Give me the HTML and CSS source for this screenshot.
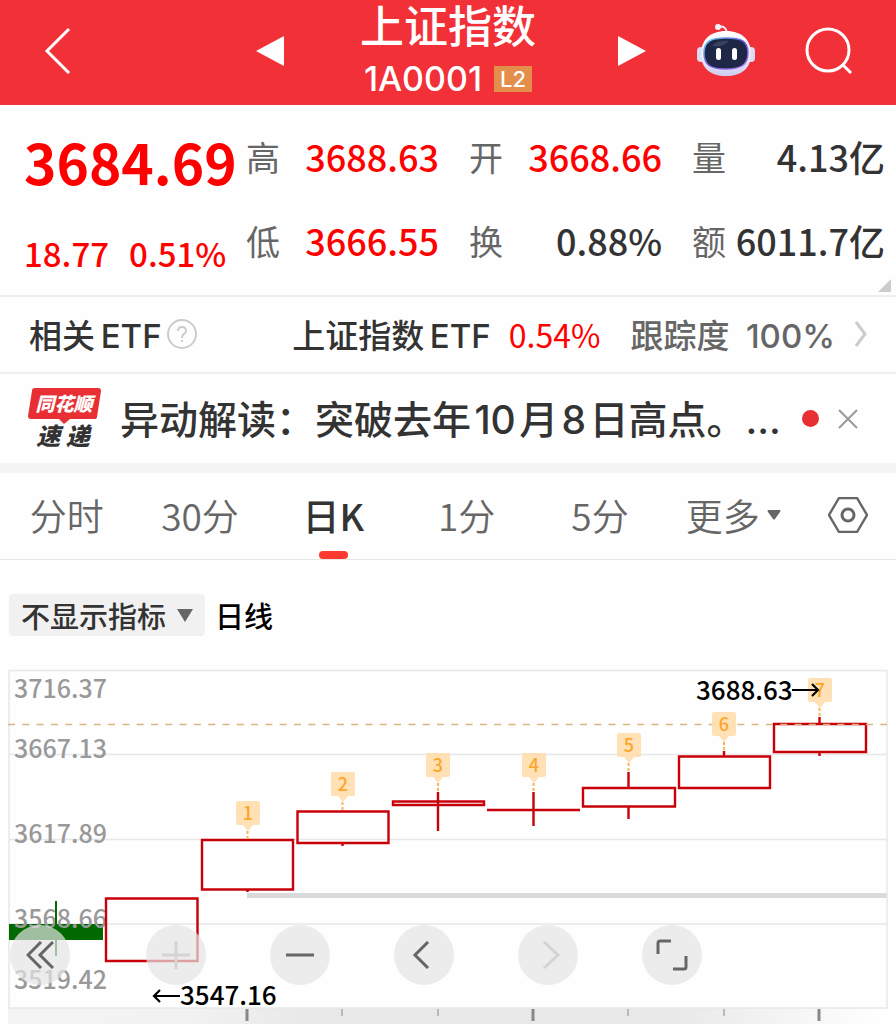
FILE: index.html
```html
<!DOCTYPE html>
<html lang="zh-CN">

<head>
    <meta charset="UTF-8" />
    <meta name="viewport" content="width=device-width, initial-scale=1.0" />
    <title>上证指数 1A0001</title>
    <link rel="stylesheet" href="styles.css">
</head>

<body>
    <header class="topbar">
        <div class="topbar-left">
            <button class="icon-btn" aria-label="返回">
                <svg width="28" height="48" viewBox="0 0 28 48"><path d="M26 2 L4 24 L26 46" fill="none" stroke="#fff" stroke-width="3" /></svg>
            </button>
            <button class="icon-btn" aria-label="上一个">
                <svg width="28" height="30" viewBox="0 0 28 30"><path d="M0 15 L28 0 V30 Z" fill="#fff" /></svg>
            </button>
        </div>
        <div class="topbar-title">
            <h1>上证指数</h1>
            <div class="code">1A0001 <span class="level">L2</span></div>
        </div>
        <div class="topbar-right">
            <button class="icon-btn" aria-label="下一个">
                <svg width="28" height="30" viewBox="0 0 28 30"><path d="M28 15 L0 0 V30 Z" fill="#fff" /></svg>
            </button>
            <button class="icon-btn" aria-label="智能助手">
                <svg width="58" height="54" viewBox="0 0 58 54">
                    <defs>
                        <linearGradient id="shell" x1="0" y1="0" x2="0" y2="1">
                            <stop offset="0" stop-color="#ffffff" />
                            <stop offset="0.6" stop-color="#ebeafa" />
                            <stop offset="1" stop-color="#cfcdf0" />
                        </linearGradient>
                        <linearGradient id="rim" x1="0" y1="0" x2="1" y2="1">
                            <stop offset="0" stop-color="#63d6ea" />
                            <stop offset="0.5" stop-color="#6a4fd8" />
                            <stop offset="1" stop-color="#b07cf5" />
                        </linearGradient>
                    </defs>
                    <path d="M21 3 Q29 1 30 9" fill="none" stroke="#eeeefa" stroke-width="2" />
                    <circle cx="21" cy="3" r="3" fill="#f4f3fd" />
                    <rect x="0" y="23" width="8" height="15" rx="4" fill="#dcdbf3" />
                    <rect x="50" y="23" width="8" height="15" rx="4" fill="#dcdbf3" />
                    <path d="M29 7 C45 7 54 16 54 30 C54 44 45 52 29 52 C13 52 4 44 4 30 C4 16 13 7 29 7 Z" fill="url(#shell)" />
                    <path d="M29 14 C44 14 51 17 51 29 C51 41 44 45 29 45 C14 45 7 41 7 29 C7 17 14 14 29 14 Z" fill="#1f2746" stroke="url(#rim)" stroke-width="1.5" />
                    <path d="M15 22 Q20 16 32 17 Q26 24 15 22" fill="#39415f" />
                    <rect x="19" y="24" width="5" height="12" rx="2.5" fill="#fff" />
                    <rect x="35" y="24" width="5" height="12" rx="2.5" fill="#fff" />
                </svg>
            </button>
            <button class="icon-btn" aria-label="搜索">
                <svg width="48" height="48" viewBox="0 0 48 48"><circle cx="23" cy="23" r="21" fill="none" stroke="#fff" stroke-width="3" /><path d="M38 38 L46 46" stroke="#fff" stroke-width="3" /></svg>
            </button>
        </div>
    </header>

    <main>
        <section class="quote">
            <div class="price">
                <div class="price-now">3684.69</div>
                <div class="price-change"><span>18.77</span><span>0.51%</span></div>
            </div>
            <dl class="stats">
                <div><dt>高</dt><dd class="up">3688.63</dd></div>
                <div><dt>开</dt><dd class="up">3668.66</dd></div>
                <div><dt>量</dt><dd>4.13亿</dd></div>
                <div><dt>低</dt><dd class="up">3666.55</dd></div>
                <div><dt>换</dt><dd>0.88%</dd></div>
                <div><dt>额</dt><dd>6011.7亿</dd></div>
            </dl>
            <svg class="corner" width="13" height="13" viewBox="0 0 13 13"><path d="M13 0 V13 H0 Z" fill="#ccc" /></svg>
        </section>

        <section class="etf">
            <span class="etf-label">相关&thinsp;ETF</span>
            <button class="icon-btn help" aria-label="说明">
                <svg width="30" height="30" viewBox="0 0 30 30" fill="none" stroke="#ccc" stroke-width="2">
                    <circle cx="15" cy="15" r="14" />
                    <path d="M11 12 Q11 8 15 8 Q19 8 19 12 Q19 14 17 15 Q15 16 15 19" />
                    <path d="M15 21 V23" />
                </svg>
            </button>
            <a class="etf-link" href="#etf">
                <span>上证指数&thinsp;ETF</span>
                <span class="etf-rate">0.54%</span>
                <span class="etf-track">跟踪度&ensp;100%</span>
                <svg width="14" height="28" viewBox="0 0 14 28"><path d="M2 2 L11 14 L2 26" fill="none" stroke="#ccc" stroke-width="3" /></svg>
            </a>
        </section>

        <section class="news">
            <svg class="news-logo" width="74" height="62" viewBox="0 0 74 62">
                <path d="M7 0 H70 Q73 0 73 3 L69 29 Q69 31 66 31 H42 L36 36 L31 31 H3 Q0 31 0 28 L4 3 Q4 0 7 0 Z" fill="#e83034" />
                <text x="36" y="23" class="logo-top">同花顺</text>
                <text x="35" y="57" class="logo-bottom">速 递</text>
            </svg>
            <a class="news-text" href="#news">异动解读：突破去年&hairsp;10&hairsp;月&hairsp;8&hairsp;日高点。...</a>
            <span class="dot"></span>
            <button class="icon-btn" aria-label="关闭">
                <svg width="20" height="20" viewBox="0 0 20 20"><path d="M1 1 L19 19 M19 1 L1 19" stroke="#999" stroke-width="2" /></svg>
            </button>
        </section>

        <nav class="tabs">
            <button>分时</button>
            <button>30分</button>
            <button class="active">日K</button>
            <button>1分</button>
            <button>5分</button>
            <button aria-haspopup="true">更多<svg width="14" height="10" viewBox="0 0 14 10"><path d="M1 0 H13 Q14 1 13 2 L8 9 Q7 10 6 9 L1 2 Q0 1 1 0 Z" fill="#666" /></svg></button>
            <button aria-label="设置">
                <svg width="40" height="36" viewBox="0 0 40 36" fill="none" stroke="#666"><path d="M11 1 H29 L39 18 L29 35 H11 L1 18 Z" stroke-width="2.4" /><circle cx="20" cy="18" r="6" stroke-width="3" /></svg>
            </button>
        </nav>

        <section class="indicator">
            <div class="select-wrap">
                <select id="indicator" aria-label="指标">
                    <option>不显示指标</option>
                </select>
                <svg width="16" height="13" viewBox="0 0 16 13"><path d="M0 0 H16 L8 13 Z" fill="#666" /></svg>
            </div>
            <label for="indicator">日线</label>
        </section>

        <section class="chart">
            <svg class="kline" viewBox="0 0 880 354">
                <defs>
                    <linearGradient id="axis">
                        <stop offset="0" stop-color="#f4f4f4" />
                        <stop offset="0.2" stop-color="#f2f2f2" />
                        <stop offset="0.35" stop-color="#e8e8e8" />
                        <stop offset="0.75" stop-color="#e8e8e8" />
                        <stop offset="1" stop-color="#ffffff" />
                    </linearGradient>
                </defs>
                <rect x="0" y="338" width="880" height="16" fill="url(#axis)" />

                <!-- frame and grid -->
                <g class="grid">
                    <rect x="1" y="0.5" width="878" height="337.5" />
                    <path d="M1 84.5 H879 M1 169.5 H879 M1 254 H879" />
                </g>
                <rect x="239" y="223" width="640" height="5" fill="#dadada" />

                <!-- falling day -->
                <rect x="1" y="254" width="94" height="16" fill="#006a00" />

                <g class="scale">
                    <text x="6" y="28">3716.37</text>
                    <text x="6" y="88">3667.13</text>
                    <text x="6" y="173">3617.89</text>
                    <text x="6" y="258">3568.66</text>
                    <text x="6" y="319">3519.42</text>
                </g>
                <path d="M48 231 V286" stroke="#006a00" stroke-width="2" />

                <!-- rising days -->
                <g class="candle">
                    <path d="M98 228.5 H189.5 V291 H98 Z" />
                    <path d="M194 170 H285 V219.5 H194 Z M239.5 219.5 V222" />
                    <path d="M289.5 141.5 H380.5 V173 H289.5 Z M334.5 173 V176" />
                    <path d="M385 131.5 H476 V135 H385 Z M430 122 V161" />
                    <path d="M479 140 H572 M525.5 122 V156" />
                    <path d="M575 118 H667 V136.5 H575 Z M620.5 102 V118 M620.5 136.5 V149" />
                    <path d="M671 86.5 H762 V118 H671 Z M716 81 V86.5" />
                    <path d="M766 54 H858 V82 H766 Z M811.5 47 V54 M811.5 82 V86" />
                </g>

                <path class="last-price" d="M0 54.5 H879" />

                <!-- day counters -->
                <g class="stem">
                    <path d="M239.5 161 V169 M334.5 132 V141 M430 113 V122 M525.5 113 V122 M620.5 93 V102 M716 72 V81 M811.5 38 V47" />
                </g>
                <g class="flag">
                    <path id="flag" d="M229 131 H250 Q252 131 252 133 V153 Q252 155 250 155 H245 L240 161 L235 155 H230 Q228 155 228 153 V133 Q228 131 230 131 Z" />
                    <use href="#flag" x="95" y="-29" />
                    <use href="#flag" x="190" y="-48" />
                    <use href="#flag" x="286" y="-48" />
                    <use href="#flag" x="381" y="-68" />
                    <use href="#flag" x="476" y="-89" />
                    <use href="#flag" x="572" y="-123" />
                </g>
                <g class="flag-text">
                    <text x="240" y="150">1</text>
                    <text x="335" y="121">2</text>
                    <text x="430" y="102">3</text>
                    <text x="526" y="102">4</text>
                    <text x="621" y="82">5</text>
                    <text x="716" y="61">6</text>
                    <text x="812" y="27">7</text>
                </g>

                <!-- high and low -->
                <g class="extreme">
                    <text x="688" y="30">3688.63</text>
                    <path d="M784 20 H810 M804 14 L810 20 L804 26" />
                    <text x="172" y="335">3547.16</text>
                    <path d="M172 326 H146 M152 320 L146 326 L152 332" />
                </g>

                <path d="M239 339 V351 M525 339 V351 M811 339 V351" stroke="#888" stroke-width="3" />
                <path d="M334 339 V346 M430 339 V346 M620 339 V346 M716 339 V346" stroke="#bbb" stroke-width="2" />
            </svg>

            <div class="tools">
                <button class="tool-first" aria-label="最早">
                    <svg width="28" height="28" viewBox="0 0 28 28"><path d="M15 1 L2 14 L15 27 M27 1 L14 14 L27 27" /></svg>
                </button>
                <button aria-label="放大" disabled>
                    <svg width="28" height="28" viewBox="0 0 28 28"><path d="M14 0 V28 M0 14 H28" /></svg>
                </button>
                <button aria-label="缩小">
                    <svg width="28" height="28" viewBox="0 0 28 28"><path d="M0 14 H28" /></svg>
                </button>
                <button aria-label="左移">
                    <svg width="28" height="28" viewBox="0 0 28 28"><path d="M18 1 L5 14 L18 27" /></svg>
                </button>
                <button aria-label="右移" disabled>
                    <svg width="28" height="28" viewBox="0 0 28 28"><path d="M10 1 L24 14 L10 27" /></svg>
                </button>
                <button aria-label="全屏">
                    <svg width="32" height="32" viewBox="0 0 32 32"><path d="M2 15 V4 Q2 2 4 2 H15 M17 30 H28 Q30 30 30 28 V17" /></svg>
                </button>
            </div>
        </section>
    </main>
</body>

</html>
```
FILE: styles.css
```css
* {
    box-sizing: border-box;
}

body {
    margin: 0;
    font-family: "Noto Sans CJK SC", sans-serif;
    font-weight: 500;
    color: #333;
    background-color: #fefefe;
}

h1,
dl,
dd {
    margin: 0;
}

button {
    padding: 0;
    border: none;
    background: none;
    font: inherit;
    color: inherit;
    cursor: pointer;
}

a {
    color: inherit;
    text-decoration: none;
}

svg {
    display: block;
}

/* header */
.topbar {
    display: grid;
    grid-template-columns: 1fr auto 1fr;
    height: 105px;
    background-color: #f23038;
    color: #fff;
}

.topbar-left,
.topbar-right {
    display: flex;
    align-items: center;
    justify-content: space-between;
}

.topbar-left {
    padding: 0 76px 4px 43px;
}

.topbar-right {
    padding: 0 43px 4px 82px;
}

.topbar-title h1 {
    font-size: 44px;
    font-weight: 500;
    line-height: 48px;
}

.code {
    display: flex;
    align-items: center;
    justify-content: center;
    gap: 12px;
    margin-top: 7px;
    font-family: Inter, sans-serif;
    font-size: 34px;
    line-height: 48px;
}

.level {
    padding: 0 6px;
    font-size: 22px;
    line-height: 26px;
    background-color: #e38e4a;
}

/* quote */
.quote {
    position: relative;
    display: flex;
    height: 192px;
    padding: 0 11px 0 24px;
    border-bottom: 2px solid #eee;
}

.price {
    flex: 0 0 222px;
    padding-top: 16px;
    color: #f00;
}

.price-now {
    font-size: 55px;
    font-weight: 700;
    line-height: 80px;
}

.price-change {
    display: flex;
    gap: 20px;
    font-size: 33px;
    line-height: 104px;
}

.stats {
    flex: 1;
    display: grid;
    grid-template-columns: repeat(3, 1fr);
    grid-auto-rows: 84px;
    column-gap: 30px;
    padding-top: 9px;
}

.stats div {
    display: flex;
    align-items: center;
    justify-content: space-between;
}

.stats dt {
    font-size: 34px;
    font-weight: 400;
    color: #666;
}

.stats dd {
    font-size: 36px;
    white-space: nowrap;
}

.stats .up {
    color: #f00;
}

.corner {
    position: absolute;
    right: 5px;
    bottom: 3px;
}

/* related etf */
.etf {
    display: flex;
    align-items: center;
    height: 77px;
    padding: 0 28px 2px 29px;
    border-bottom: 2px solid #eee;
    font-family: Inter, "Noto Sans CJK SC", sans-serif;
    font-size: 33px;
    white-space: nowrap;
}

.help {
    margin-left: 5px;
}

.etf-link {
    display: flex;
    align-items: center;
    margin-left: auto;
}

.etf-rate {
    margin: 0 30px 0 18px;
    font-family: "Noto Sans CJK SC", sans-serif;
    font-size: 32px;
    font-weight: 400;
    color: #f00;
}

.etf-track {
    margin-right: 19px;
    color: #666;
}

/* news */
.news {
    display: flex;
    align-items: center;
    height: 99px;
    padding: 0 38px 0 28px;
    border-bottom: 10px solid #f4f4f4;
}

.news-text {
    flex: 1;
    margin-left: 18px;
    padding-bottom: 4px;
    font-family: Inter, "Noto Sans CJK SC", sans-serif;
    font-size: 39px;
    white-space: nowrap;
}

.logo-top,
.logo-bottom {
    font-size: 19px;
    font-weight: 900;
    font-style: italic;
    text-anchor: middle;
    fill: #fff;
}

.logo-bottom {
    font-size: 24px;
    fill: #333;
}

.dot {
    width: 17px;
    height: 17px;
    margin-right: 19px;
    border-radius: 50%;
    background-color: #e83034;
}

/* period tabs */
.tabs {
    display: grid;
    grid-template-columns: repeat(6, 1fr) 96px;
    height: 87px;
    border-bottom: 1px solid #e6e6e6;
    font-size: 37px;
    font-weight: 350;
    color: #666;
}

.tabs button {
    position: relative;
    display: flex;
    align-items: center;
    justify-content: center;
    gap: 7px;
    padding-bottom: 2px;
}

.tabs .active {
    font-weight: 500;
    color: #333;
}

.tabs .active::after {
    content: "";
    position: absolute;
    bottom: 0;
    width: 29px;
    height: 8px;
    border-radius: 4px;
    background-color: #fd3a30;
}

/* indicator */
.indicator {
    display: flex;
    align-items: center;
    gap: 10px;
    padding: 34px 9px;
    font-size: 29px;
    line-height: 42px;
    color: #000;
}

.select-wrap {
    position: relative;
}

.select-wrap select {
    display: block;
    height: 42px;
    padding: 0 38px 0 12px;
    appearance: none;
    border: none;
    border-radius: 4px;
    background-color: #f1f1f1;
    font: inherit;
    color: #333;
}

.select-wrap svg {
    position: absolute;
    top: 15px;
    right: 12px;
    pointer-events: none;
}

/* chart */
.chart {
    position: relative;
    margin: 0 8px;
}

.kline {
    width: 100%;
    height: auto;
    overflow: visible;
}

.grid {
    fill: none;
    stroke: #e8e8e8;
    stroke-width: 1.5;
}

.scale {
    font-size: 25px;
    fill: #999;
}

.candle {
    fill: none;
    stroke: #c80008;
    stroke-width: 2.4;
}

.last-price {
    stroke: #d9b580;
    stroke-width: 1.5;
    stroke-dasharray: 7 7.3;
}

.stem {
    stroke: #fbb650;
    stroke-width: 2;
    stroke-dasharray: 3 2;
}

.flag {
    fill: #ffdca8;
    fill-opacity: 0.85;
}

.flag-text {
    font-size: 18px;
    text-anchor: middle;
    fill: #fba62b;
}

.extreme {
    font-size: 26px;
    fill: #000;
}

.extreme path {
    fill: none;
    stroke: #000;
    stroke-width: 2.2;
}

.tools {
    position: absolute;
    left: 2px;
    bottom: 39px;
    display: flex;
    gap: 64px;
}

.tool-first {
    margin-right: 12px;
}

.tools button {
    display: flex;
    align-items: center;
    justify-content: center;
    width: 60px;
    height: 60px;
    border-radius: 50%;
    background-color: rgba(228, 228, 228, 0.7);
}

.tools svg {
    fill: none;
    stroke: #666;
    stroke-width: 3;
}

.tools button:disabled svg {
    stroke: #d4d4d4;
}
```
